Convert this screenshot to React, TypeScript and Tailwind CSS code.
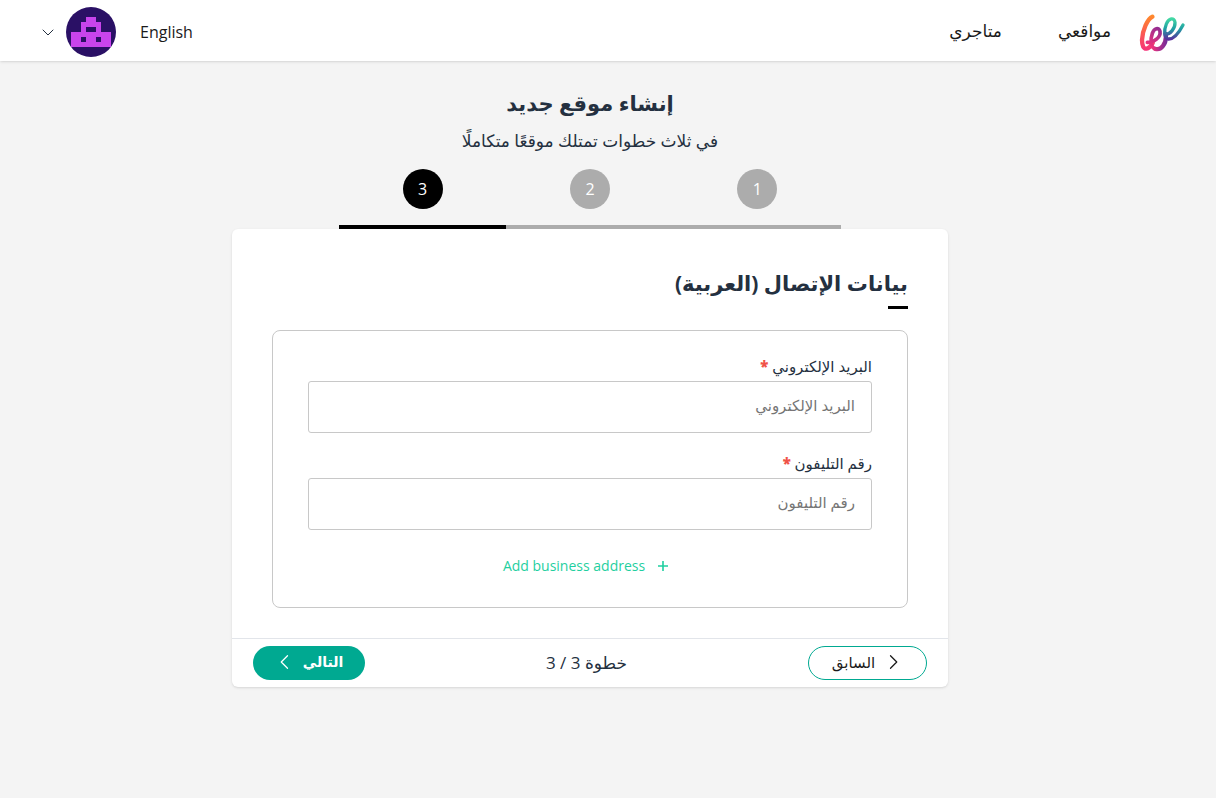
import { useState, type ReactNode } from "react";

const STEPS = [1, 2, 3];
const CURRENT_STEP = 3;

function Logo() {
  return (
    <svg className="h-[38px] w-[47px]" viewBox="58 40 141 114" fill="none" strokeLinecap="round" strokeLinejoin="round">
      <defs>
        <linearGradient id="warm" x1="0" y1="44" x2="0" y2="150" gradientUnits="userSpaceOnUse">
          <stop offset="0" stopColor="#ff8a2b" />
          <stop offset="0.5" stopColor="#fb5a52" />
          <stop offset="1" stopColor="#f5337a" />
        </linearGradient>
        <linearGradient id="middle" x1="90" y1="140" x2="128" y2="85" gradientUnits="userSpaceOnUse">
          <stop offset="0" stopColor="#f5337a" />
          <stop offset="1" stopColor="#8e2c92" />
        </linearGradient>
        <linearGradient id="violet" x1="100" y1="0" x2="150" y2="0" gradientUnits="userSpaceOnUse">
          <stop offset="0" stopColor="#e8337f" />
          <stop offset="1" stopColor="#5b2a9d" />
        </linearGradient>
        <linearGradient id="cool" x1="0" y1="52" x2="0" y2="118" gradientUnits="userSpaceOnUse">
          <stop offset="0" stopColor="#45dba4" />
          <stop offset="0.5" stopColor="#1f9da3" />
          <stop offset="1" stopColor="#5b2a9d" />
        </linearGradient>
      </defs>
      <path d="M98 48C84 54 68 88 67 118C67 136 72 145 81 144C88 143 94 135 99 127" stroke="url(#warm)" strokeWidth="13" />
      <path d="M83 125C103 126 124 110 121 92C118 79 103 82 98 98C92 116 92 137 106 145" stroke="url(#middle)" strokeWidth="11" />
      <path d="M106 144C122 150 142 132 138 100" stroke="url(#violet)" strokeWidth="13" />
      <path d="M137 101C152 101 167 83 166 65C164 49 147 52 140 70C132 90 133 112 146 115C162 116 178 96 190 73" stroke="url(#cool)" strokeWidth="10" />
    </svg>
  );
}

function Avatar() {
  return (
    <svg className="h-[50px] w-[50px] rounded-full" viewBox="0 0 10 10" shapeRendering="crispEdges">
      <rect width="10" height="10" fill="#2a1065" />
      <path
        d="M4 2h2v1h1v2h2v3H1V5h2V3h1zM4 4v1h2V4zM3 6v1h1V6zM6 6v1h1V6z"
        fill="#c844ec"
        fillRule="evenodd"
      />
    </svg>
  );
}

function Chevron({ className, d }: { className: string; d: string }) {
  return (
    <svg className={className} viewBox="0 0 16 16" fill="none" stroke="currentColor" strokeLinecap="round" strokeLinejoin="round">
      <path d={d} />
    </svg>
  );
}

function Header() {
  return (
    <header className="flex h-[61px] items-center justify-between bg-white pr-[30px] pl-10 text-base text-[#1a1a1a] shadow-sm">
      <div className="flex items-center gap-7">
        <a href="#home" aria-label="الرئيسية" className="pt-1">
          <Logo />
        </a>
        <nav className="flex gap-14 text-[17px] leading-6">
          <a href="#sites">مواقعي</a>
          <a href="#stores">متاجري</a>
        </nav>
      </div>
      <div className="flex items-center gap-6 pt-0.5">
        <button type="button">English</button>
        <button type="button" aria-label="الحساب" className="flex items-center gap-2.5">
          <Avatar />
          <Chevron className="h-4 w-4 text-[#243040]" d="M3 6l5 5 5-5" />
        </button>
      </div>
    </header>
  );
}

function Stepper() {
  return (
    <ol className="mx-auto grid w-full max-w-[502px] grid-cols-3">
      {STEPS.map((step) => (
        <li
          key={step}
          className={`flex justify-center border-b-4 pb-4 ${
            step === CURRENT_STEP ? "border-black" : "border-[#acacac]"
          }`}
        >
          <span
            className={`flex h-10 w-10 items-center justify-center rounded-full text-base font-medium text-white ${
              step === CURRENT_STEP ? "bg-black" : "bg-[#acacac]"
            }`}
          >
            {step}
          </span>
        </li>
      ))}
    </ol>
  );
}

interface FieldProps {
  id: string;
  type: string;
  label: string;
  value: string;
  onChange: (value: string) => void;
}

function Field({ id, type, label, value, onChange }: FieldProps) {
  return (
    <div>
      <label htmlFor={id} className="block h-6 text-[15px] leading-[22px] text-[#243040]">
        {label} <span className="font-extrabold text-[#f05248]">*</span>
      </label>
      <input
        id={id}
        type={type}
        dir="rtl"
        value={value}
        placeholder={label}
        onChange={(e) => onChange(e.target.value)}
        className="mt-[2px] block h-[52px] w-full rounded-[3px] border border-[#c8c8c8] bg-white px-4 pb-1 text-[15px] placeholder:text-[#757575]"
      />
    </div>
  );
}

function FormCard({ title, children }: { title: string; children: ReactNode }) {
  return (
    <div className="px-10 pt-[38px] pb-[30px]">
      <h2 className="text-[21px] leading-8 font-bold">{title}</h2>
      <div className="mt-[7px] h-[3px] w-5 bg-black" />
      <div className="mt-[21px] rounded-lg border border-[#c8c8c8] px-[35px] pt-6 pb-[29px]">{children}</div>
    </div>
  );
}

export default function App() {
  const [email, setEmail] = useState("");
  const [phone, setPhone] = useState("");

  return (
    <div
      dir="rtl"
      className="min-h-screen bg-[#f4f4f4] font-['Open_Sans','DejaVu_Sans',sans-serif] text-[#243040]"
    >
      <Header />
      <main className="pt-[26px] pr-9 pb-10">
        <h1 className="text-center text-[21px] leading-8 font-bold">إنشاء موقع جديد</h1>
        <p className="mt-[10px] mb-4 text-center text-[17px] leading-6">في ثلاث خطوات تمتلك موقعًا متكاملًا</p>
        <Stepper />
        <form
          onSubmit={(e) => e.preventDefault()}
          className="mx-auto max-w-[716px] rounded-md bg-white shadow-sm"
        >
          <FormCard title="بيانات الإتصال (العربية)">
            <div className="flex flex-col gap-[19px]">
              <Field id="email" type="email" label="البريد الإلكتروني" value={email} onChange={setEmail} />
              <Field id="phone" type="tel" label="رقم التليفون" value={phone} onChange={setPhone} />
            </div>
            <button
              type="button"
              className="mx-auto mt-6 flex h-6 items-center gap-3 pr-2 text-sm font-medium text-[#1fcfa0]"
            >
              <svg className="h-3 w-3" viewBox="0 0 12 12" stroke="currentColor" strokeWidth="1.6">
                <path d="M6 1v10M1 6h10" />
              </svg>
              Add business address
            </button>
          </FormCard>
          <div className="flex items-center justify-between border-t border-[#e2e5ea] px-[21px] py-[7px]">
            <button
              type="button"
              className="flex h-[34px] w-[119px] items-center justify-center gap-2 rounded-full border border-[#00a991] pb-0.5 text-[15px] text-[#1a1a1a]"
            >
              <Chevron className="h-5 w-5" d="M6 3l5 5-5 5" />
              السابق
            </button>
            <span className="text-[17px] leading-6">خطوة 3 / 3</span>
            <button
              type="submit"
              className="flex h-[34px] w-28 items-center justify-center gap-2 rounded-full bg-[#00a991] pb-0.5 text-sm font-semibold text-white"
            >
              التالي
              <Chevron className="h-5 w-5" d="M10 3L5 8l5 5" />
            </button>
          </div>
        </form>
      </main>
    </div>
  );
}
